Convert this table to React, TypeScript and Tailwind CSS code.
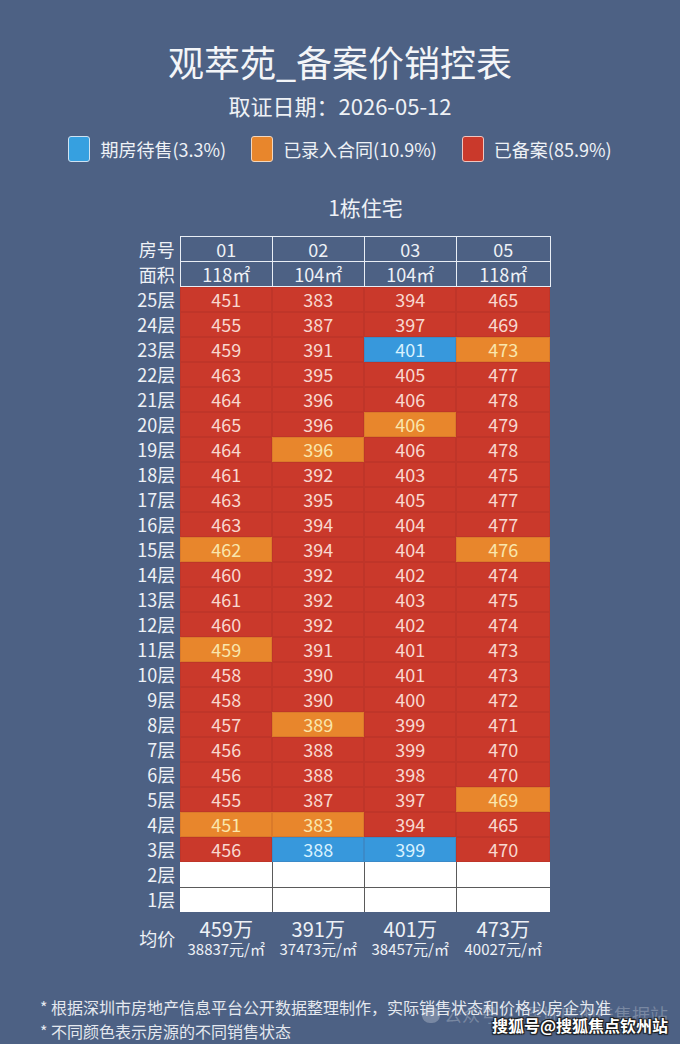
import React from "react";

type S = "r" | "o" | "b";

// floor, [price, status] x4 (units 01 02 03 05)
const FLOORS: [number, [number, S][]][] = [
  [25, [[451, "r"], [383, "r"], [394, "r"], [465, "r"]]],
  [24, [[455, "r"], [387, "r"], [397, "r"], [469, "r"]]],
  [23, [[459, "r"], [391, "r"], [401, "b"], [473, "o"]]],
  [22, [[463, "r"], [395, "r"], [405, "r"], [477, "r"]]],
  [21, [[464, "r"], [396, "r"], [406, "r"], [478, "r"]]],
  [20, [[465, "r"], [396, "r"], [406, "o"], [479, "r"]]],
  [19, [[464, "r"], [396, "o"], [406, "r"], [478, "r"]]],
  [18, [[461, "r"], [392, "r"], [403, "r"], [475, "r"]]],
  [17, [[463, "r"], [395, "r"], [405, "r"], [477, "r"]]],
  [16, [[463, "r"], [394, "r"], [404, "r"], [477, "r"]]],
  [15, [[462, "o"], [394, "r"], [404, "r"], [476, "o"]]],
  [14, [[460, "r"], [392, "r"], [402, "r"], [474, "r"]]],
  [13, [[461, "r"], [392, "r"], [403, "r"], [475, "r"]]],
  [12, [[460, "r"], [392, "r"], [402, "r"], [474, "r"]]],
  [11, [[459, "o"], [391, "r"], [401, "r"], [473, "r"]]],
  [10, [[458, "r"], [390, "r"], [401, "r"], [473, "r"]]],
  [9, [[458, "r"], [390, "r"], [400, "r"], [472, "r"]]],
  [8, [[457, "r"], [389, "o"], [399, "r"], [471, "r"]]],
  [7, [[456, "r"], [388, "r"], [399, "r"], [470, "r"]]],
  [6, [[456, "r"], [388, "r"], [398, "r"], [470, "r"]]],
  [5, [[455, "r"], [387, "r"], [397, "r"], [469, "o"]]],
  [4, [[451, "o"], [383, "o"], [394, "r"], [465, "r"]]],
  [3, [[456, "r"], [388, "b"], [399, "b"], [470, "r"]]],
];

const UNITS = [
  { no: "01", area: "118㎡", avg: "459万", per: "38837元/㎡" },
  { no: "02", area: "104㎡", avg: "391万", per: "37473元/㎡" },
  { no: "03", area: "104㎡", avg: "401万", per: "38457元/㎡" },
  { no: "05", area: "118㎡", avg: "473万", per: "40027元/㎡" },
];

const CELL: Record<S, string> = {
  r: "bg-[#ca392b] text-[#f8d8d0]",
  o: "bg-[#e8862c] text-[#f9e7ac]",
  b: "bg-[#3798dc] text-[#d8f2ff]",
};

const font = { fontFamily: '"Noto Sans CJK SC", "Noto Sans", sans-serif' };

export default function App() {
  return (
    <div className="relative min-h-[1044px] w-[680px] bg-[#4d6184] text-[#eef1f6] pt-[39px]" style={font}>
      <h1 className="text-center text-[36px] leading-[44px] text-[#f3f5f8]">观萃苑_备案价销控表</h1>
      <p className="mt-[8px] text-center text-[22px] leading-[28px] text-[#eef1f5]">取证日期：2026-05-12</p>

      <div className="mt-[17px] flex justify-center items-center gap-[25px] text-[18px] leading-[26px]">
        <div className="flex items-center gap-[10px]">
          <span className="w-[22px] h-[26px] rounded-[3px] border border-[#cfe2f2] bg-[#36a0e0]" />
          期房待售(3.3%)
        </div>
        <div className="flex items-center gap-[10px]">
          <span className="w-[22px] h-[26px] rounded-[3px] border border-[#f3d7bd] bg-[#e8862c]" />
          已录入合同(10.9%)
        </div>
        <div className="flex items-center gap-[10px]">
          <span className="w-[22px] h-[26px] rounded-[3px] border border-[#efc6c0] bg-[#ca392b]" />
          已备案(85.9%)
        </div>
      </div>

      <div className="mt-[31px] flex justify-center">
        <div className="w-[51px]" />
        <p className="w-[370px] text-center text-[21px] leading-[28px]">1栋住宅</p>
      </div>

      <table className="mt-[15px] mx-auto table-fixed border-collapse text-[18px]">
        <colgroup>
          <col className="w-[51px]" />
          <col className="w-[92px]" />
          <col className="w-[92px]" />
          <col className="w-[92px]" />
          <col className="w-[94px]" />
        </colgroup>
        <tbody>
          <tr className="h-[25px] leading-[23px]">
            <td className="pr-[5px] text-right p-0">房号</td>
            {UNITS.map((u) => (
              <td key={u.no} className="border border-[#e9eef5] text-center p-0">{u.no}</td>
            ))}
          </tr>
          <tr className="h-[25px] leading-[23px]">
            <td className="pr-[5px] text-right p-0">面积</td>
            {UNITS.map((u) => (
              <td key={u.no} className="border border-[#e9eef5] text-center p-0">{u.area}</td>
            ))}
          </tr>
          {FLOORS.map(([f, cells]) => (
            <tr key={f} className="h-[25px] leading-[25px]">
              <td className="pr-[5px] text-right p-0">{f}层</td>
              {cells.map(([v, s], i) => (
                <td
                  key={i}
                  className={`${CELL[s]} text-center p-0 shadow-[inset_0_0_0_1px_rgba(100,20,30,0.1)]`}
                >
                  {v}
                </td>
              ))}
            </tr>
          ))}
          {[2, 1].map((f) => (
            <tr key={f} className="h-[25px] leading-[25px]">
              <td className="pr-[5px] text-right p-0">{f}层</td>
              {UNITS.map((u, i) => (
                <td
                  key={u.no}
                  className={`bg-white p-0 border-b border-[#5a5a5a] ${i < 3 ? "border-r" : ""} ${f === 1 ? "border-b-0" : ""}`}
                />
              ))}
            </tr>
          ))}
          <tr>
            <td className="pr-[5px] text-right p-0 pt-[6px]">均价</td>
            {UNITS.map((u) => (
              <td key={u.no} className="text-center p-0 pt-[5px]">
                <div className="text-[20px] leading-[23px]">{u.avg}</div>
                <div className="text-[15px] leading-[18px]">{u.per}</div>
              </td>
            ))}
          </tr>
        </tbody>
      </table>

      <div className="mt-[37px] pl-[40px] text-[16px] leading-[24px] text-[#e4e8ef]">
        <p>* 根据深圳市房地产信息平台公开数据整理制作，实际销售状态和价格以房企为准</p>
        <p>* 不同颜色表示房源的不同销售状态</p>
      </div>

      <div className="absolute left-[422px] top-[1001px] flex items-center gap-[4px] text-[18px] text-white/25">
        <span className="w-[18px] h-[16px] rounded-full bg-white/25" />
        <span>公众号 · 深圳房地产售据站</span>
      </div>
      <div className="absolute right-[12px] top-[1014px] text-[16px] leading-[22px] font-bold text-white [text-shadow:1px_1px_1px_#1a1a1a,-1px_-1px_1px_#1a1a1a,1px_-1px_1px_#1a1a1a,-1px_1px_1px_#1a1a1a]">
        搜狐号@搜狐焦点钦州站
      </div>
    </div>
  );
}
